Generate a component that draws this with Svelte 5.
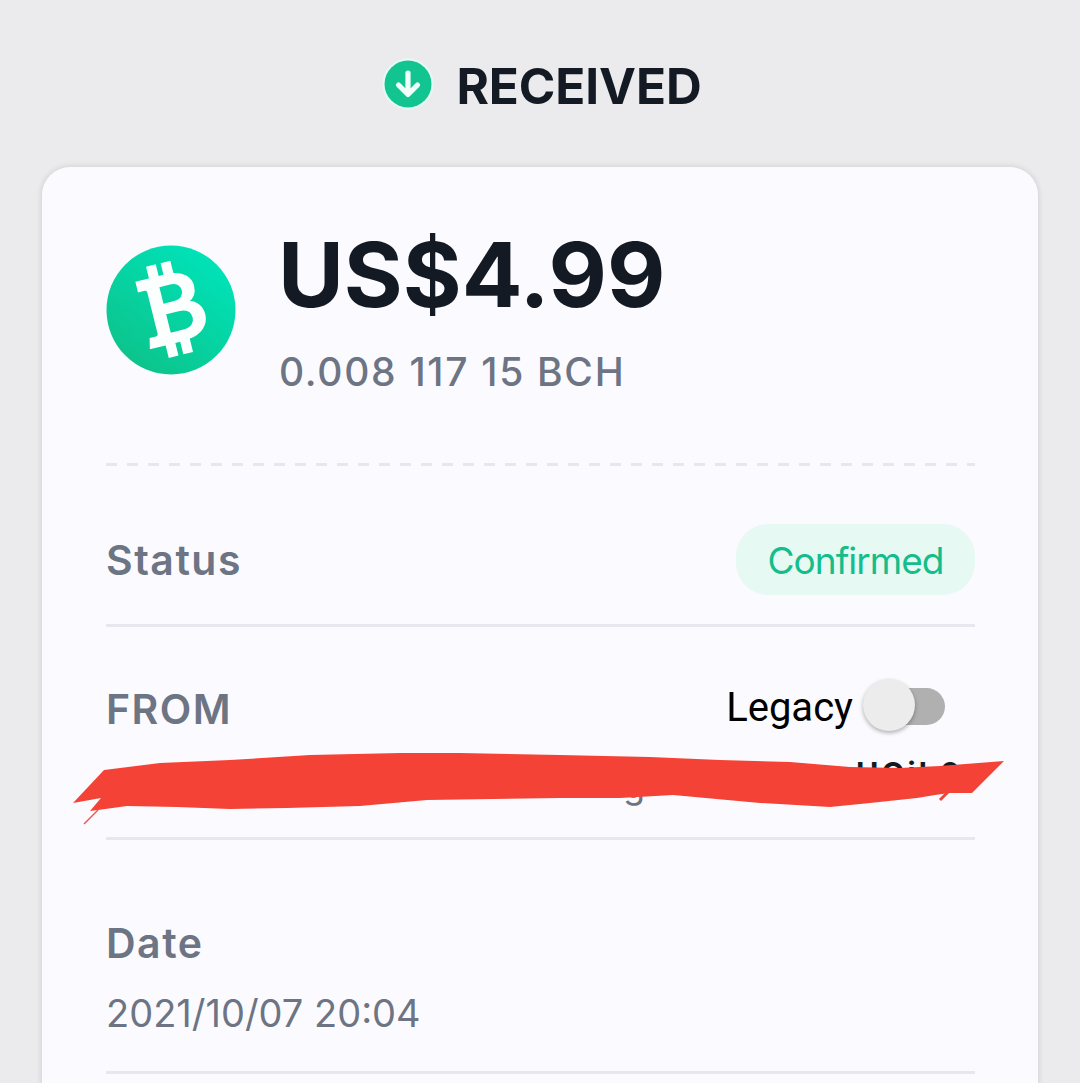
<script>
  const rows = { date: '2021/10/07 20:04' };
</script>

<div class="page">
  <header class="head">
    <svg class="badge" viewBox="0 0 52 52" aria-hidden="true">
      <circle cx="26" cy="26" r="25.500" fill="#e6faf5" />
      <circle cx="26" cy="26" r="23.500" fill="#12c48f" />
      <path d="M26 15v21M16.500 27l9.500 9.500 9.500-9.500" fill="none" stroke="#f2fffb" stroke-width="5.200" stroke-linecap="round" stroke-linejoin="round" />
    </svg>
    <h1>RECEIVED</h1>
  </header>

  <main class="card">
    <section class="amount">
      <svg class="coin" viewBox="0 0 130 130" aria-hidden="true">
        <defs>
          <linearGradient id="g" x1="0.8" y1="0.1" x2="0.2" y2="0.9">
            <stop offset="0" stop-color="#00e2b8" />
            <stop offset="1" stop-color="#0cc48c" />
          </linearGradient>
        </defs>
        <circle cx="65" cy="65" r="64.500" fill="url(#g)" />
        <path transform="rotate(-14 65 64)" fill="#fbfffe" stroke="#fbfffe" stroke-width="2" fill-rule="evenodd" d="M38 30H52V18H60V30H67V18H75V30.500C86 32 92 39 92 47C92 54 88 59 83 61C91 63 96 69 96 77C96 88 88 95 75 96.500V110H67V97H60V110H52V97H36L38 88H44Q47 88 47 85V42Q47 39 44 39H38ZM58 39V58H70C78 58 81 53 81 48.500C81 43 77 39 70 39ZM58 67V88H72C81 88 85 83 85 77.500C85 71 80 67 72 67Z" />
      </svg>
      <div class="sums">
        <div class="fiat">US$4.99</div>
        <div class="crypto">0.008 117 15 BCH</div>
      </div>
    </section>

    <hr class="dashed" />

    <section class="row status">
      <span class="label">Status</span>
      <span class="pill">Confirmed</span>
    </section>

    <section class="from">
      <div class="from-top">
        <span class="label">FROM</span>
        <div class="legacy">
          <span>Legacy</span>
          <span class="switch"><span class="thumb"></span></span>
        </div>
      </div>
      <div class="address">
        <span class="peek-top">HOil 0</span>
        <span class="peek-bot">g</span>
      </div>
      <svg class="scribble" viewBox="72 750 940 80" aria-hidden="true">
        <path fill="#f44336" d="M104 770 160 763 230 760 310 755 400 753 460 753 560 755 650 757 720 760 790 762 850 767 900 768 940 766 1004 761 972 793 950 793 935 795 917 798 870 803 830 807 760 803 673 795 620 798 560 798 427 800 360 806 287 808 230 809 177 807 127 806 98 810 90 811 101 798 73 803z" />
        <path fill="none" stroke="#e8584c" stroke-width="1.500" d="M98 810 84 824" />
        <path fill="none" stroke="#f44336" stroke-width="3" d="M940 800 948 792" />
      </svg>
    </section>

    <section class="date">
      <div class="label">Date</div>
      <div class="value">{rows.date}</div>
    </section>
  </main>
</div>

<style>
  :global(body) {
    margin: 0;
    background: #ebebed;
  }
  .page {
    height: 1083px;
    overflow: hidden;
    font-family: Inter, "Noto Sans", sans-serif;
    background: #ebebed;
  }
  .head {
    height: 167px;
    padding-left: 4px;
    display: flex;
    align-items: flex-start;
    justify-content: center;
    gap: 22px;
  }
  .badge {
    width: 52px;
    height: 52px;
    margin-top: 58px;
  }
  h1 {
    margin: 57px 0 0;
    font-size: 49.500px;
    line-height: 58px;
    font-weight: 700;
    color: #141a24;
    letter-spacing: -0.1px;
  }
  .card {
    box-sizing: border-box;
    margin: 0 42px;
    padding: 0 63px 0 64px;
    height: 1000px;
    background: #fbfbff;
    border-radius: 28px;
    box-shadow: 0 0 6px rgba(0, 0, 0, 0.14);
  }
  .amount {
    display: flex;
    gap: 42px;
    padding-top: 54px;
    height: 296px;
    box-sizing: border-box;
  }
  .coin {
    width: 130px;
    height: 130px;
    margin-top: 24px;
  }
  .fiat {
    font-size: 90px;
    line-height: 108px;
    font-weight: 700;
    color: #141a24;
  }
  .crypto {
    margin-top: 20px;
    margin-left: 1px;
    font-size: 39px;
    line-height: 46px;
    font-weight: 500;
    color: #6d7483;
    letter-spacing: 1.700px;
  }
  .dashed {
    margin: 0;
    height: 3px;
    border: 0;
    background: repeating-linear-gradient(to right, #e7e8ef 0 11px, transparent 11px 21px);
  }
  .label {
    font-size: 41px;
    line-height: 46px;
    font-weight: 600;
    color: #6d7483;
    letter-spacing: 1.500px;
  }
  .row {
    display: flex;
    justify-content: space-between;
    align-items: center;
  }
  .status {
    box-sizing: border-box;
    height: 161px;
    padding-top: 30px;
    border-bottom: 3px solid #e7e8ef;
  }
  .pill {
    width: 239px;
    height: 71px;
    margin-top: -1px;
    border-radius: 32px;
    background: #e6f9f3;
    color: #14bd89;
    font-size: 37px;
    font-weight: 400;
    line-height: 74px;
    text-align: center;
    letter-spacing: -1px;
  }
  .from {
    position: relative;
    box-sizing: border-box;
    height: 213px;
    border-bottom: 3px solid #e7e8ef;
  }
  .from-top {
    display: flex;
    justify-content: space-between;
    align-items: flex-start;
    padding-top: 59px;
  }
  .legacy {
    display: flex;
    align-items: center;
    margin-top: -3px;
    padding-right: 30px;
    font-family: Roboto, sans-serif;
    font-size: 40px;
    line-height: 50px;
    color: #000;
  }
  .switch {
    position: relative;
    width: 70px;
    height: 37px;
    margin-left: 22px;
    margin-bottom: 4px;
    border-radius: 19px;
    background: #b0b0b0;
  }
  .thumb {
    position: absolute;
    left: -12px;
    top: -9px;
    width: 52px;
    height: 52px;
    border-radius: 50%;
    background: #ececec;
    box-shadow: 0 2px 4px rgba(0, 0, 0, 0.3);
  }
  .address {
    position: absolute;
    inset: 124px 0 auto 0;
    height: 60px;
    font-size: 30px;
  }
  .peek-top {
    position: absolute;
    left: 750px;
    top: 4px;
    color: #141a24;
    font-weight: 700;
    letter-spacing: 3px;
  }
  .peek-bot {
    position: absolute;
    left: 517px;
    top: 12px;
    color: #6d7483;
    font-size: 36px;
  }
  .scribble {
    position: absolute;
    left: -34px;
    top: 123px;
    width: 940px;
    height: 80px;
    overflow: visible;
  }
  .date {
    box-sizing: border-box;
    height: 234px;
    padding-top: 80px;
    border-bottom: 3px solid #e7e8ef;
  }
  .value {
    margin-top: 24px;
    font-size: 38px;
    line-height: 46px;
    color: #6d7483;
  }
</style>
